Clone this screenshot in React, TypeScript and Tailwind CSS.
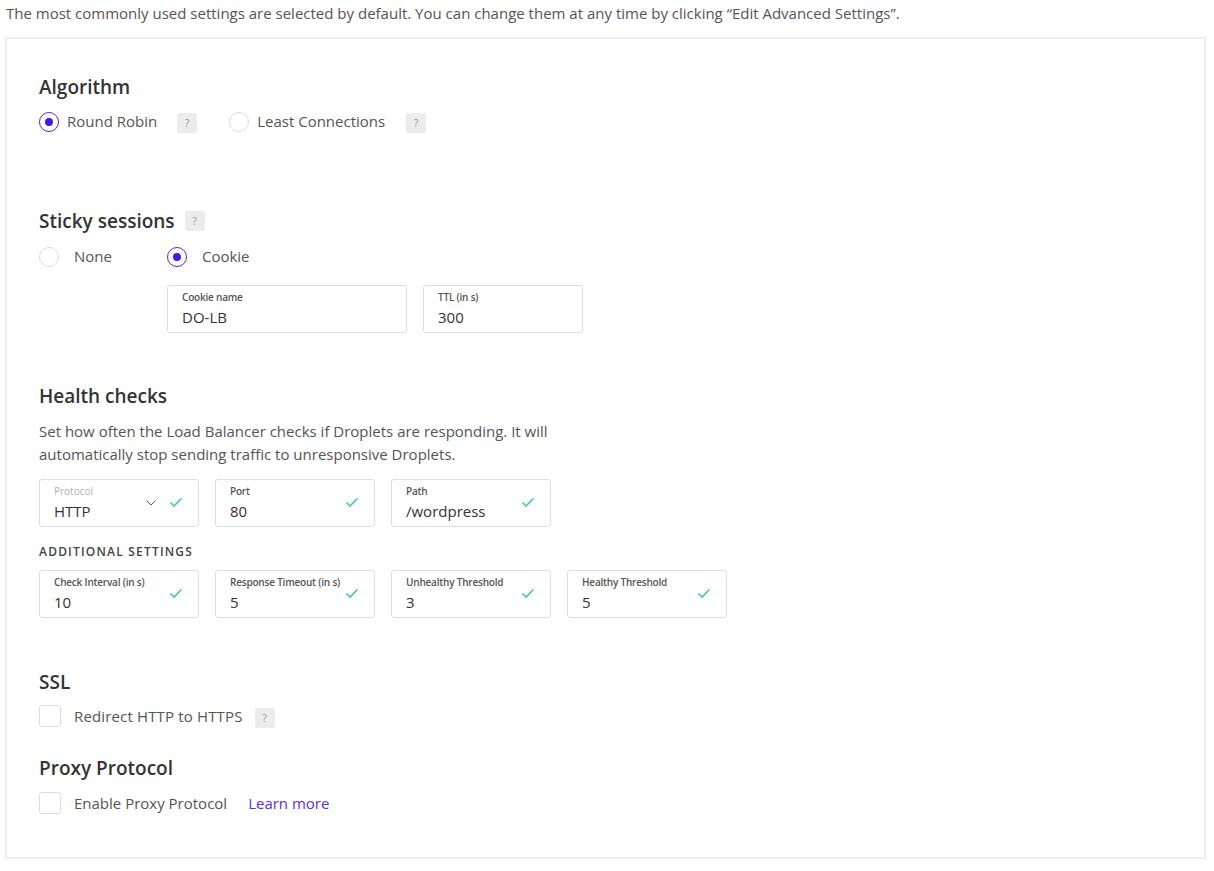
import { ChevronDown } from "lucide-react";

function Check() {
  return (
    <svg width="14" height="11" viewBox="0 0 14 11" fill="none" className="shrink-0">
      <path d="M1.5 5.5L5 9l7.5-7.5" stroke="#3fcf8e" strokeWidth="1.6" />
    </svg>
  );
}

function Help() {
  return (
    <span className="inline-flex h-[20px] w-[20px] items-center justify-center rounded-[2px] bg-[#ececec] text-[11px] font-normal text-[#9a9a9a]">
      ?
    </span>
  );
}

function Radio({ checked }: { checked?: boolean }) {
  return (
    <span
      className={
        checked
          ? "flex h-[20px] w-[20px] shrink-0 items-center justify-center rounded-full border border-[#4a2ce0]"
          : "flex h-[20px] w-[20px] shrink-0 items-center justify-center rounded-full border border-[#dcdcdc]"
      }
    >
      {checked && <span className="h-[8px] w-[8px] rounded-full bg-[#3f1ce6]" />}
    </span>
  );
}

function Checkbox() {
  return <span className="h-[22px] w-[22px] shrink-0 rounded-[3px] border border-[#dcdcdc]" />;
}

interface IFieldProps {
  label: string;
  value: string;
  width?: string;
  check?: boolean;
  select?: boolean;
}

function Field({ label, value, width = "w-[160px]", check = true, select }: IFieldProps) {
  return (
    <div
      className={`${width} flex h-[48px] items-center justify-between rounded-[3px] border border-[#dedede] pl-[14px] pr-[15px]`}
    >
      <div className="flex flex-col">
        <span
          className={
            select
              ? "whitespace-nowrap text-[10px] leading-[13px] text-[#b0b0b0]"
              : "whitespace-nowrap text-[10px] font-semibold leading-[13px] tracking-[-0.02em] text-[#555]"
          }
        >
          {label}
        </span>
        <span className="mt-[3px] text-[15px] leading-[20px] text-[#333]">{value}</span>
      </div>
      <div className="flex items-center gap-[10px]">
        {select && <ChevronDown className="h-[16px] w-[16px] text-[#555]" strokeWidth={1.5} />}
        {check && <Check />}
      </div>
    </div>
  );
}

export default function App() {
  return (
    <div className="min-h-[871px] bg-white font-['Open_Sans',sans-serif] text-[#555]">
      <p className="pl-[6px] pt-[3px] text-[15px] leading-[20px] text-[#555]">
        The most commonly used settings are selected by default. You can change them at any time by
        clicking “Edit Advanced Settings”.
      </p>

      <div className="ml-[5px] mt-[14px] w-[1201px] border-2 border-[#eeeeee] pb-[42px] pl-[32px] pt-[36px]">
        <h2 className="text-[19px] font-semibold leading-[24px] text-[#333]">Algorithm</h2>
        <div className="mt-[11px] flex items-center text-[15px]">
          <Radio checked />
          <span className="ml-[8px]">Round Robin</span>
          <span className="ml-[20px]">
            <Help />
          </span>
          <span className="ml-[32px]">
            <Radio />
          </span>
          <span className="ml-[8px]">Least Connections</span>
          <span className="ml-[21px]">
            <Help />
          </span>
        </div>

        <h2 className="mt-[76px] flex items-center gap-[10px] text-[19px] font-semibold leading-[24px] text-[#333]">
          Sticky sessions <Help />
        </h2>
        <div className="mt-[12px] flex items-center text-[15px]">
          <Radio />
          <span className="ml-[15px]">None</span>
          <span className="ml-[55px]">
            <Radio checked />
          </span>
          <span className="ml-[15px]">Cookie</span>
        </div>
        <div className="ml-[128px] mt-[17px] flex gap-[16px]">
          <Field label="Cookie name" value="DO-LB" width="w-[240px]" check={false} />
          <Field label="TTL (in s)" value="300" check={false} />
        </div>

        <h2 className="mt-[51px] text-[19px] font-semibold leading-[24px] text-[#333]">Health checks</h2>
        <p className="mt-[12px] w-[540px] text-[15px] leading-[23px]">
          Set how often the Load Balancer checks if Droplets are responding. It will automatically stop
          sending traffic to unresponsive Droplets.
        </p>
        <div className="mt-[13px] flex gap-[16px]">
          <Field label="Protocol" value="HTTP" select />
          <Field label="Port" value="80" />
          <Field label="Path" value="/wordpress" />
        </div>
        <div className="mt-[17px] text-[12px] font-semibold uppercase leading-[16px] tracking-[0.1em] text-[#444]">
          Additional settings
        </div>
        <div className="mt-[10px] flex gap-[16px]">
          <Field label="Check Interval (in s)" value="10" />
          <Field label="Response Timeout (in s)" value="5" />
          <Field label="Unhealthy Threshold" value="3" />
          <Field label="Healthy Threshold" value="5" />
        </div>

        <h2 className="mt-[52px] text-[19px] font-semibold leading-[24px] text-[#333]">SSL</h2>
        <div className="mt-[11px] flex items-center text-[15px]">
          <Checkbox />
          <span className="ml-[13px] tracking-[0.01em]">Redirect HTTP to HTTPS</span>
          <span className="ml-[12px]">
            <Help />
          </span>
        </div>

        <h2 className="mt-[28px] text-[19px] font-semibold leading-[24px] text-[#333]">Proxy Protocol</h2>
        <div className="mt-[12px] flex items-center text-[15px]">
          <Checkbox />
          <span className="ml-[13px]">Enable Proxy Protocol</span>
          <a className="ml-[21px] text-[#5a30e0]" href="#">
            Learn more
          </a>
        </div>
      </div>
    </div>
  );
}
